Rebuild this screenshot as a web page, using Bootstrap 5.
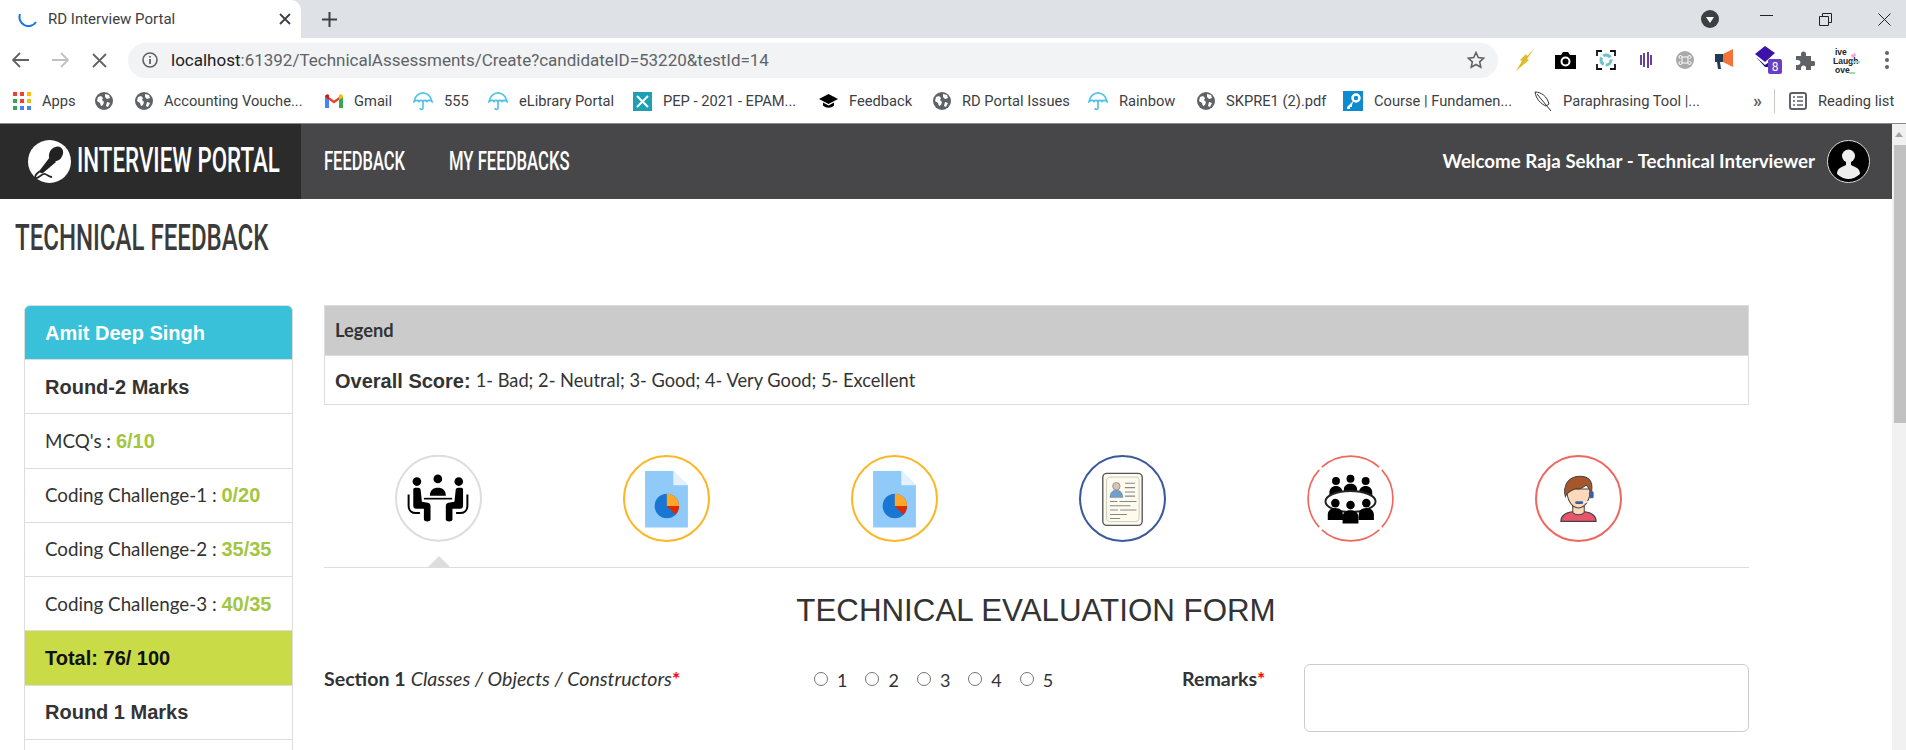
<!DOCTYPE html>
<html lang="en">
<head>
  <meta charset="UTF-8">
  <meta name="viewport" content="width=device-width, initial-scale=1">
  <title>RD Interview Portal</title>
  <link href="https://cdn.jsdelivr.net/npm/bootstrap@5.3.0/dist/css/bootstrap.min.css" rel="stylesheet">
  <style>
    html, body { height: 750px; overflow: hidden; background: #fff; }
    body { font-family: "Lato", "Liberation Sans", sans-serif; color: #333; }

    /* browser chrome */
    .tab-strip { height: 38px; background: #dee1e6; }
    .tab-cur { width: 301px; height: 38px; background: #fff; border-radius: 0 10px 0 0; padding-left: 18px; font: 15px "Roboto", sans-serif; color: #3c4043; }
    .tab-cur span { margin-left: 10px; }
    .tab-close { margin-left: auto; margin-right: 10px; }
    .tab-plus { margin-left: 21px; }
    .win-btns { margin-left: auto; }
    .win-menu { margin-right: 41px; }
    .win-min { margin-right: 46px; }
    .win-max { margin-right: 46px; }
    .win-x { margin-right: 15px; }
    .tool-bar { height: 44px; padding-left: 12px; }
    .nav-ico { margin-right: 23px; }
    .omni { width: 1370px; height: 35px; margin-left: -2px; background: #f1f3f4; border-radius: 18px; padding: 0 13px 0 14px; font: 17px "Roboto", sans-serif; color: #5f6368; }
    .omni b { font-weight: 400; color: #202124; }
    .omni span { margin-left: 13px; }
    .omni svg:last-child { margin-left: auto; }
    .ext-row { margin-left: 18px; display: grid; grid-template-columns: 39px 41px 44px 36px 39px 40px 41px 36px 53px 4px; align-items: center; }
    .live-txt { font: 700 8.500px "Liberation Sans", sans-serif; fill: #222; }
    .bm-bar { height: 42px; padding-bottom: 3px; border-bottom: 1px solid #8a8a8a; font: 14.700px "Roboto", sans-serif; color: #3c4043; display: grid; grid-template-columns: 82px 40px 190px 88px 75px 145px 186px 114px 155px 109px 146px 191px 219px 21px 15px auto; padding-left: 13px; align-items: center; }
    .bm-item { gap: 11px; white-space: nowrap; }
    .bm-more { font-size: 18px; font-weight: 700; line-height: 18px; color: #5f6368; }
    .bm-sep { width: 1px; height: 24px; background: #c8c8c8; }

    /* app */
    .app-wrap { height: 626px; overflow: hidden; }
    .app-main { width: 1892px; }
    .fake-scroll { width: 14px; background: #f1f1f1; padding: 21px 0 0 2px; position: relative; }
    .fake-scroll div { height: 278px; background: #c1c1c1; }
    .fake-scroll i { position: absolute; top: 8px; left: 3px; border: 4px solid transparent; border-top: 0; border-bottom: 5px solid #a3a3a3; }
    .top-nav { height: 75px; background: #474749; }
    .brand-box { width: 301px; height: 75px; flex: none; background: #2b2b2b; padding-left: 28px; color: #fff; overflow: hidden; }
    .brand-box svg { flex: none; }
    .cond { font-family: "Roboto", "Liberation Sans", sans-serif; font-weight: 500; display: inline-block; white-space: nowrap; transform-origin: left center; }
    .brand-name { font-size: 35px; transform: scaleX(.638); margin-left: 6px; }
    .top-link { color: #fff; text-decoration: none; font-size: 25px; }
    .link-a { width: 125px; margin-left: 23px; }
    .link-a .cond { transform: scaleX(.66); }
    .link-b .cond { transform: scaleX(.667); }
    .who { margin-left: auto; margin-right: 22px; color: #fff; font-size: 18.700px; font-weight: 700; gap: 12px; }
    .page-title { font-size: 36px; color: #3b3b3b; margin: 20px 0 0 15px; height: 86px; line-height: 34px; font-weight: 400; }
    .page-title .cond { transform: scaleX(.668); }

    .side-col { width: 269px; margin-left: 24px; flex: none; font-size: 18.800px; }
    .side-col .list-group-item { height: 54.250px; padding: 0 0 0 20px; border-color: #ddd; color: #333; display: flex; align-items: center; white-space: pre; }
    .side-strong { font-family: "Liberation Sans", sans-serif; font-weight: 700; font-size: 20px; }
    .side-col .side-head { background: #38c1d9; color: #fff; height: 55px; }
    .side-col .side-total { background: #cadb48; color: #111; }
    .side-mark { font-family: "Liberation Sans", sans-serif; font-weight: 700; color: #a4c63f; font-size: 20px; }
    .body-col { width: 1425px; margin-left: 31px; flex: none; }
    .legend-box { border: 1px solid #ddd; border-radius: 0; font-size: 18.250px; }
    .legend-box .card-header { height: 50px; background: #cbcbcb; border-radius: 0; border-bottom: 1px solid #ddd; padding: 0 10px; font-weight: 700; display: flex; align-items: center; color: #333; }
    .legend-box .card-body { height: 48px; padding: 1px 10px 0; display: flex; align-items: center; }
    .legend-box b { font-family: "Liberation Sans", sans-serif; font-size: 20px; margin-right: 5px; }
    .step-row { margin: 50px 0 0; padding: 0 0 11px; height: 113px; border-bottom: 1px solid #ddd; position: relative; list-style: none; }
    .step-row li { width: 16%; }
    .step-row li svg { display: block; margin: 0 auto; }
    .step-row .step-tip { position: absolute; left: 104px; bottom: 0; width: 0; border: 11px solid transparent; border-top: 0; border-bottom: 11px solid #ddd; }
    .form-head { font-family: "Liberation Sans", sans-serif; font-size: 31.300px; font-weight: 400; color: #333; text-align: center; margin: 23px 0 0 -1px; line-height: 40px; height: 40px; }
    .eval-row { display: grid; grid-template-columns: 490px 368px 122px 445px; margin-top: 33px; }
    .eval-row label { font-size: 19.600px; padding-top: 0; }
    .req { color: #f00; font-weight: 700; }
    .pick-group { gap: 18px; padding-top: 2px; }
    .pick-group .form-check { padding: 0; margin: 0; display: flex; align-items: center; gap: 9px; min-height: 0; }
    .pick-group .form-check-input { float: none; margin: 0; width: 14px; height: 14px; border-color: #767676; }
    .eval-row .pick-group .form-check-label { padding: 3px 0 0; font-size: 18px; line-height: 22px; }
    .eval-row textarea { height: 68px; border-color: #ccc; resize: none; }
  </style>
</head>
<body>

<svg width="0" height="0" class="position-absolute">
  <symbol id="globe" viewBox="0 0 18 18"><circle cx="9" cy="9" r="9" fill="#5f6368"/><path d="M3 5l3-1 2 2-1 2 2 2-1 3-2 1-1-3-3-2zM10 2l4 1 1 3-3 1-2-2zM12 10l3 1-2 4-2-1z" fill="#fff"/></symbol>
  <symbol id="umbrella" viewBox="0 0 20 20"><path d="M1 10.500C2 5 6 2 10 2s8 3 9 8.500c-2-1.500-4-1.500-5 0-1-1.500-3-1.500-4 0-1-1.500-3-1.500-4 0-1-1.500-3-1.500-5 0z" fill="none" stroke="#4ec1e6" stroke-width="1.600"/><path d="M10 1v1M10 9v8c0 2-3 2-3 0" fill="none" stroke="#4ec1e6" stroke-width="1.600"/></symbol>
  <symbol id="step-doc" viewBox="764 51 256 256">
    <circle cx="892" cy="179" r="125" fill="#fff" stroke="#fbb726" stroke-width="6"/>
    <path d="M829 98h83l43 42v124H829z" fill="#90caf9"/><path d="M912 98l43 42h-43z" fill="#e3f2fd"/>
    <circle cx="893" cy="201" r="36" fill="#1976d2"/>
    <path d="M893 201v-36a36 36 0 0 1 36 36z" fill="#ffa726"/><path d="M893 201h36a36 36 0 0 1-11 26z" fill="#dd2c00"/>
  </symbol>
</svg>

<!-- browser chrome -->
<div class="tab-strip d-flex align-items-center">
  <div class="tab-cur d-flex align-items-center">
    <svg width="20" height="20" viewBox="0 0 20 20"><path d="M2 5a9 9 0 0 0 16 8" fill="none" stroke="#1a73e8" stroke-width="2"/></svg>
    <span>RD Interview Portal</span>
    <svg class="tab-close" width="12" height="12" viewBox="0 0 12 12"><path d="M1 1l10 10M11 1L1 11" stroke="#3c4043" stroke-width="1.800"/></svg>
  </div>
  <svg class="tab-plus" width="15" height="15" viewBox="0 0 15 15"><path d="M7.500 0v15M0 7.500h15" stroke="#3c4043" stroke-width="2"/></svg>
  <div class="win-btns d-flex align-items-center">
    <svg class="win-menu" width="18" height="18" viewBox="0 0 18 18"><circle cx="9" cy="9" r="9" fill="#3c4043"/><path d="M5 7h8l-4 6z" fill="#fff"/></svg>
    <svg class="win-min" width="13" height="13" viewBox="0 0 13 13"><path d="M0 2.500h13" stroke="#222" stroke-width="1"/></svg>
    <svg class="win-max" width="13" height="13" viewBox="0 0 13 13"><path d="M.5 3.500h9v9h-9zM3.500 3.500v-3h9v9h-3" fill="none" stroke="#222"/></svg>
    <svg class="win-x" width="13" height="13" viewBox="0 0 13 13"><path d="M.5.500l12 12M12.500.500l-12 12" stroke="#222"/></svg>
  </div>
</div>
<div class="tool-bar d-flex align-items-center">
  <svg class="nav-ico" width="17" height="16" viewBox="0 0 17 16"><path d="M8 1L1 8l7 7M1 8h16" fill="none" stroke="#5f6368" stroke-width="1.800"/></svg>
  <svg class="nav-ico" width="17" height="16" viewBox="0 0 17 16"><path d="M9 1l7 7-7 7M16 8H0" fill="none" stroke="#bdc1c6" stroke-width="1.800"/></svg>
  <svg class="nav-ico" width="15" height="15" viewBox="0 0 15 15"><path d="M1 1l13 13M14 1L1 14" stroke="#5f6368" stroke-width="1.800"/></svg>
  <div class="omni d-flex align-items-center">
    <svg width="16" height="16" viewBox="0 0 16 16"><circle cx="8" cy="8" r="7" fill="none" stroke="#5f6368" stroke-width="1.600"/><path d="M8 7v5M8 4v1.600" stroke="#5f6368" stroke-width="1.800"/></svg>
    <span><b>localhost</b>:61392/TechnicalAssessments/Create?candidateID=53220&amp;testId=14</span>
    <svg width="18" height="18" viewBox="0 0 18 18"><path d="M9 1.500l2.300 5 5.400.600-4 3.700 1.100 5.400L9 13.500l-4.800 2.700 1.100-5.400-4-3.700 5.400-.600z" fill="none" stroke="#5f6368" stroke-width="1.600"/></svg>
  </div>
  <div class="ext-row">
    <svg width="18" height="22" viewBox="0 0 18 22"><path d="M18 0L11 10l2 1L0 22 6 12l-2-1L10 5l1 2z" fill="#dcbc2c"/></svg>
    <svg width="21" height="18" viewBox="0 0 21 18"><path d="M0 4h6l2-3h5l2 3h6v14H0z"/><circle cx="10.500" cy="10.500" r="4" fill="none" stroke="#fff" stroke-width="2"/></svg>
    <svg width="20" height="20" viewBox="0 0 20 20"><path d="M1 6V1h5M14 1h5v5M19 14v5h-5M6 19H1v-5" fill="none" stroke="#111" stroke-width="1.800"/><circle cx="10" cy="10" r="5" fill="none" stroke="#6cc3c9" stroke-width="3" stroke-dasharray="8 2"/></svg>
    <svg width="12" height="18" viewBox="0 0 12 18"><path d="M1 4v10M4 2v14M8 1v16M11 4v10" stroke="#6b3fa0" stroke-width="2"/></svg>
    <svg width="18" height="18" viewBox="0 0 18 18"><circle cx="9" cy="9" r="9" fill="#a9a9a9"/><path d="M6 6h6v6H6zM6 6a1.500 1.500 0 1 0-1.500 1.500M12 6a1.500 1.500 0 1 1 1.500 1.500M6 12a1.500 1.500 0 1 1-1.500-1.500M12 12a1.500 1.500 0 1 0 1.500-1.500" fill="none" stroke="#fff"/></svg>
    <svg width="20" height="22" viewBox="0 0 20 22"><path d="M8 5l10-5v18L8 13z" fill="#f4733a"/><path d="M0 5h8v8H5l1 7H3l-1-7H0z" fill="#1f3a52"/></svg>
    <svg width="28" height="28" viewBox="0 0 28 28"><path d="M10 0l10 7-10 9-10-8z" fill="#3d12a8"/><path d="M1 11l9 8 4-3v5l-4 0z" fill="#24107a"/><rect x="13" y="13" width="14" height="15" rx="2" fill="#6a3fc4"/><text x="20" y="25" text-anchor="middle" fill="#fff" font-size="12" font-family="Roboto">8</text></svg>
    <svg width="19" height="19" viewBox="0 0 19 19"><path d="M0 5h5V3a2.500 2.500 0 0 1 5 0v2h5v5h2a2.500 2.500 0 0 1 0 5h-2v4H10v-2a2.500 2.500 0 0 0-5 0v2H0v-5h2a2.500 2.500 0 0 0 0-5H0z" fill="#5f6368"/></svg>
    <svg width="28" height="27" viewBox="0 0 28 27"><text class="live-txt" x="3" y="8">ive</text><text class="live-txt" x="1" y="17">Laugh</text><text class="live-txt" x="3" y="26">ove</text><path d="M19 8l4-2 1 3-4 2z" fill="#f2a7d8"/><path d="M20 15h8" stroke="#8ed6ee" stroke-width="2"/><path d="M17 26h6" stroke="#9be0a6" stroke-width="2"/></svg>
    <svg width="4" height="18" viewBox="0 0 4 18"><circle cx="2" cy="2" r="2" fill="#5f6368"/><circle cx="2" cy="9" r="2" fill="#5f6368"/><circle cx="2" cy="16" r="2" fill="#5f6368"/></svg>
  </div>
</div>
<div class="bm-bar">
  <div class="bm-item d-flex align-items-center"><svg width="18" height="18" viewBox="0 0 18 18"><path d="M0 0h4v4H0z" fill="#ea4335"/><path d="M7 0h4v4H7z" fill="#ea4335"/><path d="M14 0h4v4h-4z" fill="#fbbc04"/><path d="M0 7h4v4H0z" fill="#34a853"/><path d="M7 7h4v4H7z" fill="#ea4335"/><path d="M14 7h4v4h-4z" fill="#fbbc04"/><path d="M0 14h4v4H0z" fill="#34a853"/><path d="M7 14h4v4H7z" fill="#4285f4"/><path d="M14 14h4v4h-4z" fill="#4285f4"/></svg>Apps</div>
  <div class="bm-item d-flex align-items-center"><svg width="18" height="18"><use href="#globe"/></svg></div>
  <div class="bm-item d-flex align-items-center"><svg width="18" height="18"><use href="#globe"/></svg>Accounting Vouche...</div>
  <div class="bm-item d-flex align-items-center"><svg width="18" height="14" viewBox="0 0 18 14"><path d="M0 3v11h4V6z" fill="#4285f4"/><path d="M18 3v11h-4V6z" fill="#34a853"/><path d="M0 3l9 6.500L18 3l-4 0-5 3.500L4 3z" fill="#ea4335"/><path d="M0 3c0-2.500 2.500-3.500 4-2v5z" fill="#c5221f"/><path d="M18 3c0-2.500-2.500-3.500-4-2v5z" fill="#fbbc04"/></svg>Gmail</div>
  <div class="bm-item d-flex align-items-center"><svg width="20" height="20"><use href="#umbrella"/></svg>555</div>
  <div class="bm-item d-flex align-items-center"><svg width="20" height="20"><use href="#umbrella"/></svg>eLibrary Portal</div>
  <div class="bm-item d-flex align-items-center"><svg width="19" height="19" viewBox="0 0 19 19"><rect width="19" height="19" fill="#1f9fb4"/><path d="M4 4l11 11M15 4L4 15" stroke="#fff" stroke-width="2"/></svg>PEP - 2021 - EPAM...</div>
  <div class="bm-item d-flex align-items-center"><svg width="19" height="14" viewBox="0 0 19 14"><path d="M9.500 0L19 5l-9.500 5L0 5z"/><path d="M4 8.500v3c3 3 8 3 11 0v-3l-5.500 3z"/></svg>Feedback</div>
  <div class="bm-item d-flex align-items-center"><svg width="18" height="18"><use href="#globe"/></svg>RD Portal Issues</div>
  <div class="bm-item d-flex align-items-center"><svg width="20" height="20"><use href="#umbrella"/></svg>Rainbow</div>
  <div class="bm-item d-flex align-items-center"><svg width="18" height="18"><use href="#globe"/></svg>SKPRE1 (2).pdf</div>
  <div class="bm-item d-flex align-items-center"><svg width="20" height="20" viewBox="0 0 20 20"><rect width="20" height="20" fill="#0f8ad0"/><circle cx="13" cy="7" r="3.500" fill="none" stroke="#fff" stroke-width="2.500"/><path d="M10.500 9.500L4 16v2h3v-2h2v-2" fill="#fff"/></svg>Course | Fundamen...</div>
  <div class="bm-item d-flex align-items-center"><svg width="18" height="21" viewBox="0 0 18 21"><path d="M1 1c6 0 12 4 14 12l-3 2C7 13 2 8 1 1zM3 3l14 17" fill="none" stroke="#333"/></svg>Paraphrasing Tool |...</div>
  <div class="bm-more">»</div>
  <div class="bm-sep"></div>
  <div class="bm-item d-flex align-items-center"><svg width="18" height="18" viewBox="0 0 18 18"><rect x="1" y="1" width="16" height="16" rx="2" fill="none" stroke="#5f6368" stroke-width="2"/><path d="M4 5h2M8 5h6M4 9h2M8 9h6M4 13h2M8 13h6" stroke="#5f6368" stroke-width="1.500"/></svg>Reading list</div>
</div>

<div class="app-wrap d-flex">
  <div class="app-main">
    <nav class="top-nav d-flex align-items-center">
      <div class="brand-box d-flex align-items-center">
        <svg width="43" height="43" viewBox="0 0 43 43"><circle cx="21.500" cy="21.500" r="21.500" fill="#fff"/><ellipse cx="28" cy="14" rx="6.500" ry="8" transform="rotate(40 28 14)" fill="#222"/><path d="M22 17l6 5-13 11c-2 1-4-1-3-3z" fill="#222"/><path d="M12 31c-4 3-6 6-4 7s6-5 9-4 4 3 7 3" fill="none" stroke="#222" stroke-width="1.800"/></svg>
        <span class="cond brand-name">INTERVIEW PORTAL</span>
      </div>
      <a href="#" class="top-link link-a"><span class="cond">FEEDBACK</span></a>
      <a href="#" class="top-link link-b"><span class="cond">MY FEEDBACKS</span></a>
      <div class="who d-flex align-items-center">
        Welcome Raja Sekhar - Technical Interviewer
        <svg width="43" height="43" viewBox="0 0 43 43"><circle cx="21.500" cy="21.500" r="21" fill="#000" stroke="#ddd"/><circle cx="21.500" cy="16" r="6.500" fill="#eee"/><path d="M19 21v4c-4 2-9 3-9 9 3 3 8 5 11.500 5S30 37 33 34c0-6-5-7-9-9v-4z" fill="#eee"/></svg>
      </div>
    </nav>
    <h1 class="page-title"><span class="cond">TECHNICAL FEEDBACK</span></h1>
    <div class="d-flex">
      <div class="side-col">
        <ul class="list-group">
          <li class="list-group-item side-head side-strong">Amit Deep Singh</li>
          <li class="list-group-item side-strong">Round-2 Marks</li>
          <li class="list-group-item">MCQ's : <span class="side-mark">6/10</span></li>
          <li class="list-group-item">Coding Challenge-1 : <span class="side-mark">0/20</span></li>
          <li class="list-group-item">Coding Challenge-2 : <span class="side-mark">35/35</span></li>
          <li class="list-group-item">Coding Challenge-3 : <span class="side-mark">40/35</span></li>
          <li class="list-group-item side-total side-strong">Total: 76/ 100</li>
          <li class="list-group-item side-strong">Round 1 Marks</li>
          <li class="list-group-item">&nbsp;</li>
        </ul>
      </div>
      <div class="body-col">
        <div class="card legend-box">
          <div class="card-header">Legend</div>
          <div class="card-body"><b>Overall Score:</b> 1- Bad; 2- Neutral; 3- Good; 4- Very Good; 5- Excellent</div>
        </div>
        <ul class="step-row d-flex">
          <li>
            <svg width="87" height="87" viewBox="73 47 262 262">
              <circle cx="204" cy="177" r="128" fill="#fff" stroke="#ddd" stroke-width="6"/>
              <circle cx="139" cy="127" r="13"/><circle cx="202" cy="119" r="13"/><circle cx="265" cy="127" r="13"/>
              <path d="M178 170c0-16 10-24 24-24s24 8 24 24z"/><path d="M160 176h85v5h-85z"/>
              <path d="M128 150c0-6 20-6 22 0l4 38 18 3c6 1 8 5 8 10v40c0 8-20 8-20 0v-32h-22c-8 0-10-4-10-10z"/>
              <path d="M278 150c0-6-20-6-22 0l-4 38-18 3c-6 1-8 5-8 10v40c0 8 20 8 20 0v-32h22c8 0 10-4 10-10z"/>
              <path d="M114 166v34c0 14 10 22 22 22h12M291 166v34c0 14-10 22-22 22h-12" fill="none" stroke="#000" stroke-width="6"/>
            </svg>
          </li>
          <li><svg width="87" height="87"><use href="#step-doc"/></svg></li>
          <li><svg width="87" height="87"><use href="#step-doc"/></svg></li>
          <li>
            <svg width="87" height="87" viewBox="931 51 256 256">
              <circle cx="1059" cy="179" r="125" fill="#fff" stroke="#3a5a9b" stroke-width="6"/>
              <rect x="1001" y="105" width="116" height="153" rx="12" fill="#fdfbee" stroke="#555" stroke-width="4"/>
              <rect x="1012" y="116" width="96" height="131" rx="12" fill="none" stroke="#b9b7a8" stroke-width="2"/>
              <path d="M1022 176c0-14 8-22 19-22s19 8 19 22z" fill="#6f9fd0" stroke="#666"/>
              <circle cx="1041" cy="143" r="11" fill="#d9c3b5" stroke="#777" stroke-width="2"/>
              <path d="M1066 134h30M1066 147h30M1066 160h30M1066 172h30M1022 188h22M1050 188h50M1022 200h60M1022 213h24M1052 213h48M1022 226h50M1022 238h30" stroke="#888" stroke-width="3"/>
            </svg>
          </li>
          <li>
            <svg width="87" height="87" viewBox="50 16 264 264">
              <path d="M95 53A129 129 0 0 1 269 53M277 61A129 129 0 0 1 277 235M269 243A129 129 0 0 1 95 243M87 235A129 129 0 0 1 87 61" fill="none" stroke="#f0675f" stroke-width="5"/>
              <circle cx="138" cy="95" r="12"/><circle cx="182" cy="88" r="12"/><circle cx="228" cy="95" r="12"/>
              <path d="M118 145v-16c0-11 9-19 20-19s20 8 20 19v16zM162 135v-15c0-11 9-17 20-17s20 6 20 17v15zM208 145v-16c0-11 9-19 20-19s20 8 20 19v16z"/>
              <ellipse cx="182" cy="157" rx="76" ry="32" fill="#fff" stroke="#222" stroke-width="6"/>
              <circle cx="136" cy="162" r="13"/><circle cx="182" cy="168" r="13"/><circle cx="230" cy="162" r="13"/>
              <path d="M113 213v-16c0-12 10-20 23-20s23 8 23 20v16zM158 224v-20c0-12 10-20 24-20s24 8 24 20v20zM207 213v-16c0-12 10-20 23-20s23 8 23 20v16z"/>
            </svg>
          </li>
          <li>
            <svg width="87" height="87" viewBox="48 19 258 258">
              <circle cx="177" cy="148" r="126" fill="#fff" stroke="#f0675f" stroke-width="6"/>
              <path d="M125 216c0-22 24-30 52-30s52 8 52 30z" fill="#e9546b" stroke="#444" stroke-width="4"/>
              <path d="M160 170v20c8 8 26 8 34 0v-20z" fill="#fcd9b8" stroke="#444" stroke-width="3"/>
              <path d="M142 120c0 30 14 56 35 56s35-26 35-56z" fill="#fcd9b8" stroke="#444" stroke-width="3"/>
              <path d="M138 142c-8-30 8-60 42-60s42 20 34 56c-2-14-8-24-14-30-10 10-26 14-30 10-8 4-26 8-32 24z" fill="#a6562a" stroke="#444" stroke-width="3"/>
              <rect x="208" y="126" width="14" height="22" rx="6" fill="#3f5f9a"/>
              <path d="M216 148v8l-28 4" fill="none" stroke="#fff" stroke-width="4"/>
              <rect x="167" y="156" width="24" height="8" rx="4" fill="#3f5f9a"/>
            </svg>
          </li>
          <li class="step-tip"></li>
        </ul>
        <h2 class="form-head">TECHNICAL EVALUATION FORM</h2>
        <form class="eval-row">
          <label for="s1r1"><b>Section 1</b> <em>Classes / Objects / Constructors</em><span class="req">*</span></label>
          <div class="pick-group d-flex align-items-start">
            <div class="form-check"><input class="form-check-input" type="radio" name="s1" id="s1r1"><label class="form-check-label" for="s1r1">1</label></div>
            <div class="form-check"><input class="form-check-input" type="radio" name="s1" id="s1r2"><label class="form-check-label" for="s1r2">2</label></div>
            <div class="form-check"><input class="form-check-input" type="radio" name="s1" id="s1r3"><label class="form-check-label" for="s1r3">3</label></div>
            <div class="form-check"><input class="form-check-input" type="radio" name="s1" id="s1r4"><label class="form-check-label" for="s1r4">4</label></div>
            <div class="form-check"><input class="form-check-input" type="radio" name="s1" id="s1r5"><label class="form-check-label" for="s1r5">5</label></div>
          </div>
          <label for="s1rem"><b>Remarks</b><span class="req">*</span></label>
          <textarea class="form-control" id="s1rem"></textarea>
        </form>
      </div>
    </div>
  </div>
  <div class="fake-scroll"><i></i><div></div></div>
</div>

<script src="https://cdn.jsdelivr.net/npm/bootstrap@5.3.0/dist/js/bootstrap.bundle.min.js"></script>
</body>
</html>
